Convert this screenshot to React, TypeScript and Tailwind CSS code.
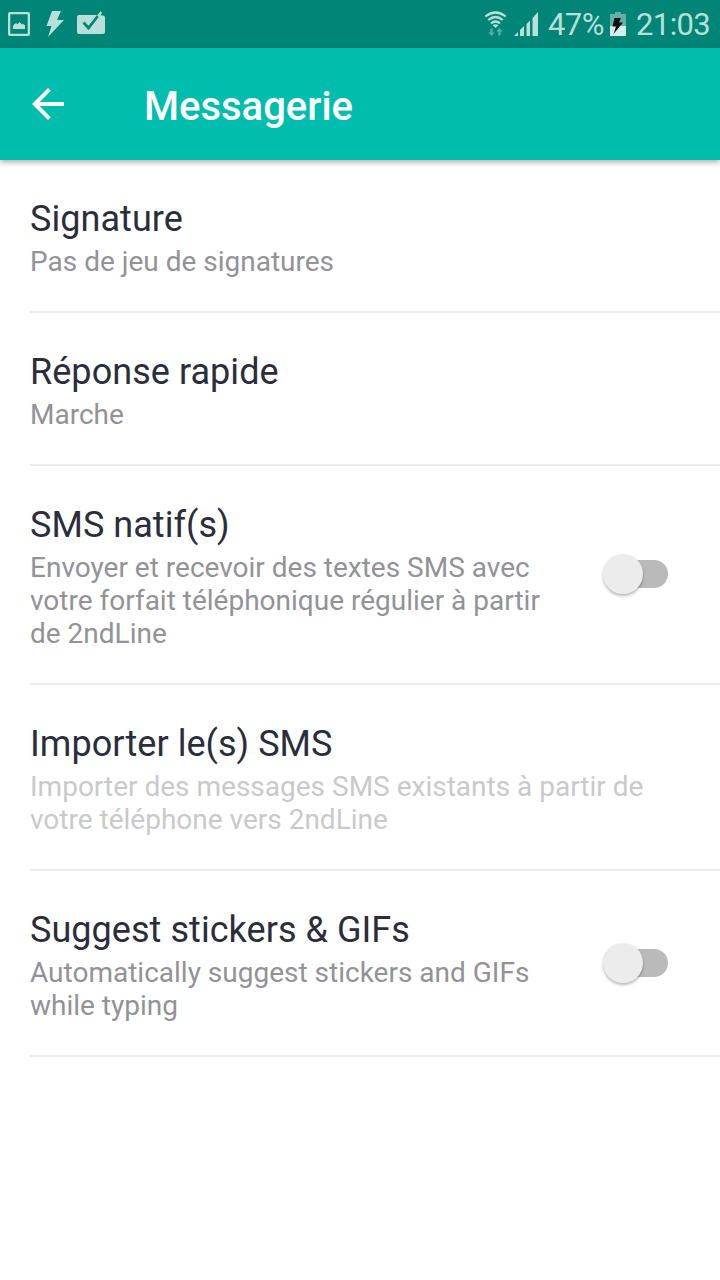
import { useState } from "react";

type Setting = {
    id: string;
    title: string;
    summary: string[];
    toggle?: boolean;
    disabled?: boolean;
};

const SETTINGS: Setting[] = [
    { id: "signature", title: "Signature", summary: ["Pas de jeu de signatures"] },
    { id: "quick-reply", title: "Réponse rapide", summary: ["Marche"] },
    {
        id: "native-sms",
        title: "SMS natif(s)",
        summary: ["Envoyer et recevoir des textes SMS avec", "votre forfait téléphonique régulier à partir", "de 2ndLine"],
        toggle: true,
    },
    {
        id: "import-sms",
        title: "Importer le(s) SMS",
        summary: ["Importer des messages SMS existants à partir de", "votre téléphone vers 2ndLine"],
        disabled: true,
    },
    {
        id: "stickers",
        title: "Suggest stickers & GIFs",
        summary: ["Automatically suggest stickers and GIFs", "while typing"],
        toggle: true,
    },
];

function StatusBar() {
    return (
        <div className="flex h-12 items-center justify-between bg-[#018577] text-[#b8dfda]">
            {/* Notifications */}
            <svg width="120" height="48" viewBox="0 0 120 48" fill="currentColor">
                <path fillRule="evenodd" d="M10 12H28Q30 12 30 14V34Q30 36 28 36H10Q8 36 8 34V14Q8 12 10 12ZM10.3 14.3V33.7H27.7V14.3Z" />
                <path d="M13 29V25.5L16 23L17.5 24.3L19.5 22L22 24.5L23 23.5L25 25.5V29Z" />
                <path d="M52 11H61L57 20H64L48 37L51.5 26H46.5Z" />
                <path d="M79 15H99L103 15.5Q105 15.5 105 17.5V32Q105 34 103 34H79Q77 34 77 32V17Q77 15 79 15Z" />
                <path d="M83.5 22.5L88.5 28L99 14.5" fill="none" stroke="#018577" strokeWidth="2.8" />
                <path d="M98 16.5L101.3 12" stroke="currentColor" strokeWidth="2.2" />
            </svg>

            <div className="flex h-12 items-center pr-[10px]">
                <svg width="64" height="48" viewBox="476 0 64 48">
                    <g fill="none" stroke="currentColor" strokeWidth="2.2">
                        <path d="M485.3 16.5Q495.5 8.5 505.7 16.5" />
                        <path d="M488.2 20Q495.5 14 502.8 20" />
                        <path d="M491 23.3Q495.5 19.7 500 23.3" />
                    </g>
                    <path d="M492.5 25.3Q495.5 23 498.5 25.3L495.5 28Z" fill="currentColor" />
                    <path d="M490.3 28.5H492.7V32.5H494.5L491.5 36L488.5 32.5H490.3ZM498.3 35.5H500.7V31.5H502.8L499.5 28L496.2 31.5H498.3Z" fill="currentColor" opacity=".45" />
                    <path d="M514 36L518 32V36ZM520 30L524 26V36H520ZM526.5 24L530 20.5V36H526.5ZM532.5 18L538 12V36H532.5Z" fill="currentColor" />
                </svg>
                <span className="ml-2 w-[56px] pt-0.5 whitespace-nowrap text-[31px] leading-[48px] tracking-[-0.6px]">47%</span>
                <svg className="ml-[6px]" width="16" height="48" viewBox="610 0 16 48">
                    <path d="M615 12H621V14H626V26H610V14H615Z" fill="#63b0a7" />
                    <path d="M610 26H626V36H610Z" fill="#d9eeeb" />
                    <path d="M614.5 18H621L619 22.5H623L613.5 34L616 26.5H612.5Z" fill="#111" />
                </svg>
                <span className="ml-[10px] w-[74px] pt-0.5 whitespace-nowrap text-[31px] leading-[48px] tracking-[-0.6px]">21:03</span>
            </div>
        </div>
    );
}

function Switch({ checked, onChange }: { checked: boolean; onChange: () => void }) {
    return (
        <button role="switch" aria-checked={checked} onClick={onChange} className="relative mr-[52px] mb-1.5 h-7 w-[60px] shrink-0 rounded-full bg-[#bababa]">
            <span className={`absolute -top-1.5 h-10 w-10 rounded-full bg-[#ececec] shadow-[0_2px_3px_rgba(0,0,0,0.28)] ${checked ? "right-0" : "-left-[5px]"}`} />
        </button>
    );
}

export default function App() {
    const [enabled, setEnabled] = useState<Record<string, boolean>>({});

    return (
        <main className="min-h-[1280px] w-full bg-white font-[Roboto,sans-serif]">
            <StatusBar />

            <header className="relative flex h-28 items-center bg-[#00bdad] pl-8 text-white shadow-[0_2px_6px_rgba(0,0,0,0.35)]">
                <svg width="32" height="32" viewBox="4 4 16 16" fill="currentColor">
                    <path d="M20 11H7.83l5.59-5.59L12 4l-8 8 8 8 1.41-1.41L7.83 13H20v-2z" />
                </svg>
                <h1 className="ml-20 pt-[5px] text-[40px] leading-[47px] font-medium">Messagerie</h1>
            </header>

            <ul className="pl-[30px]">
                {SETTINGS.map((s) => (
                    <li key={s.id} className="flex items-center justify-between border-b-2 border-[#ececec] pt-[38px] pb-[33px]">
                        <div>
                            <h2 className="h-[47px] text-[36px] leading-[42px] tracking-[0.05px] text-[#2b2d3a]">{s.title}</h2>
                            <p className={`text-[28px] leading-[33px] ${s.disabled ? "text-[#c9c9cb]" : "text-[#929297]"}`}>
                                {s.summary.map((line) => (
                                    <span key={line} className="block whitespace-nowrap">{line}</span>
                                ))}
                            </p>
                        </div>
                        {s.toggle && (
                            <Switch checked={!!enabled[s.id]} onChange={() => setEnabled((prev) => ({ ...prev, [s.id]: !prev[s.id] }))} />
                        )}
                    </li>
                ))}
            </ul>
        </main>
    );
}
